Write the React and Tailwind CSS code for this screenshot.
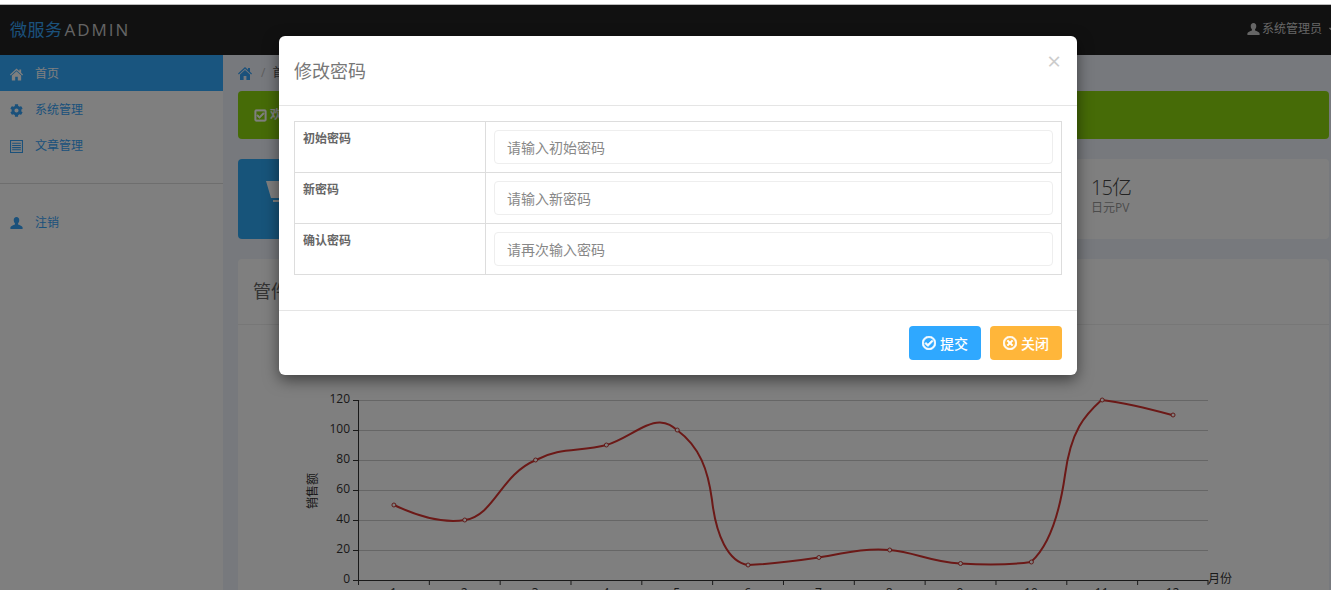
import React from "react";
import { FaCog, FaRegCheckSquare, FaRegCheckCircle, FaRegTimesCircle, FaCaretDown } from "react-icons/fa";

const cjk = { fontFamily: '"Open Sans", "Noto Sans CJK SC", sans-serif' };

const HomeIcon = ({ className }) => (
  <svg viewBox="0 0 14 13" fill="currentColor" className={className}>
    <path d="M7 0 L10 2.8 V1 H12 V4.7 L14 6.6 L13.2 7.5 L7 1.8 L0.8 7.5 L0 6.6 Z" />
    <path d="M7 3 L12 7.6 V13 H8.4 V9 H5.6 V13 H2 V7.6 Z" />
  </svg>
);

const UserIcon = ({ className }) => (
  <svg viewBox="0 0 14 13" fill="currentColor" className={className}>
    <path d="M7 0 C9 0 10 1.4 10 3.4 C10 5 9.4 6 8.7 6.8 V8 C10.6 8.8 13.4 9.6 13.6 11 V13 H0.4 V11 C0.6 9.6 3.4 8.8 5.3 8 V6.8 C4.6 6 4 5 4 3.4 C4 1.4 5 0 7 0 Z" />
  </svg>
);

const ListIcon = ({ className }) => (
  <svg viewBox="0 0 12 12" fill="currentColor" className={className}>
    <path fillRule="evenodd" d="M0 0 H12 V12 H0 Z M1 1 V11 H11 V1 Z" />
    <path d="M2 2.5 H10 V3.5 H2 Z M2 4.5 H10 V5.5 H2 Z M2 6.5 H10 V7.5 H2 Z M2 8.5 H10 V9.5 H2 Z" />
  </svg>
);

const CartIcon = ({ className }) => (
  <svg viewBox="0 0 44 28" fill="currentColor" className={className}>
    <path d="M0 1 H30 L34 0 H42 V3 H36 L32 18 H5 Z" />
    <path d="M7 20 H31 V22 H20 V26 H14 V22 H7 Z" />
  </svg>
);

const navItems = [
  { label: "首页", icon: HomeIcon, active: true },
  { label: "系统管理", icon: FaCog },
  { label: "文章管理", icon: ListIcon },
];

const stats = [
  { value: "2.5亿", label: "日元收入" },
  { value: "5千万", label: "日元成本" },
  { value: "120亿", label: "日元总额" },
  { value: "15亿", label: "日元PV" },
];

const rows = [
  { label: "初始密码", placeholder: "请输入初始密码" },
  { label: "新密码", placeholder: "请输入新密码" },
  { label: "确认密码", placeholder: "请再次输入密码" },
];

const values = [50, 40, 80, 90, 100, 10, 15, 20, 11, 12, 120, 110];
const axisLeft = 120;
const step = 70.83;
const yOf = (v) => 246 - v * 1.5;

// 销售额 chart, coordinates are relative to the svg box
const SalesChart = () => (
  <svg width="1000" height="270" viewBox="0 0 1000 270" className="block">
    {[20, 40, 60, 80, 100, 120].map((v) => (
      <line key={v} x1={axisLeft} x2={axisLeft + 850} y1={yOf(v) + 0.5} y2={yOf(v) + 0.5} stroke="#ccc" />
    ))}
    <line x1={axisLeft + 0.5} x2={axisLeft + 0.5} y1={yOf(120)} y2={yOf(0)} stroke="#333" />
    <line x1={axisLeft} x2={axisLeft + 850} y1={yOf(0) + 0.5} y2={yOf(0) + 0.5} stroke="#333" />
    {[0, 20, 40, 60, 80, 100, 120].map((v) => (
      <g key={v}>
        <line x1={axisLeft - 5} x2={axisLeft} y1={yOf(v) + 0.5} y2={yOf(v) + 0.5} stroke="#333" />
        <text x={axisLeft - 8} y={yOf(v) + 3} textAnchor="end" fontSize="12" fill="#333" style={cjk}>
          {v}
        </text>
      </g>
    ))}
    {values.map((_, i) => (
      <line
        key={i}
        x1={axisLeft + step * i + 0.5}
        x2={axisLeft + step * i + 0.5}
        y1={yOf(0)}
        y2={yOf(0) + 5}
        stroke="#333"
      />
    ))}
    <line x1={axisLeft + 850} x2={axisLeft + 850} y1={yOf(0)} y2={yOf(0) + 5} stroke="#333" />
    {values.map((_, i) => (
      <text
        key={i}
        x={axisLeft + step * (i + 0.5)}
        y={yOf(0) + 17}
        textAnchor="middle"
        fontSize="12"
        fill="#333"
        style={cjk}
      >
        {i + 1}
      </text>
    ))}
    <text x={axisLeft + 850} y={yOf(0) + 3} fontSize="12" fill="#333" style={cjk}>
      月份
    </text>
    <text
      transform={`translate(${axisLeft - 41} 157) rotate(-90)`}
      textAnchor="middle"
      fontSize="12"
      fill="#333"
      style={cjk}
    >
      销售额
    </text>
    <path
      transform="translate(-238 -334)"
      d="M394 505 C415 515 440 524 465 520 C495 515 500 475 536 460 C560 447 580 452 606.5 445 C625 440 645 422 660 422.5 C668 423 672 426 677 430 C700 447 708 470 712 500 C716 535 728 562 748 565 C770 564 795 561 819 557.5 C845 553 865 548 889.5 550 C915 552 930 562 960 563.5 C985 565 1010 565 1031 562 C1050 545 1060 510 1065 475 C1071 430 1085 415 1101.5 400 C1125 403 1150 409 1172 415"
      fill="none"
      stroke="#d8332f"
      strokeWidth="2"
    />
    {values.map((v, i) => (
      <circle
        key={i}
        cx={axisLeft + step * (i + 0.5) + 0.5}
        cy={yOf(v)}
        r="2"
        fill="#fff"
        stroke="#c23531"
      />
    ))}
  </svg>
);

const PasswordModal = () => (
  <div
    className="absolute left-[279px] top-[31px] w-[798px] rounded-md bg-white shadow-[0_5px_15px_rgba(0,0,0,0.5)]"
    style={cjk}
  >
    <div className="relative h-[70px] border-b border-[#e5e5e5] pl-[15px] pt-[20px]">
      <h4 className="text-[18px] leading-[30px] text-[#777]">修改密码</h4>
      <span className="absolute right-[16px] top-[10px] text-[24px] leading-[30px] text-[#ccc]">×</span>
    </div>
    <div className="px-[15px] pt-[15px] pb-[35px]">
      <table className="w-full border-collapse">
        <tbody>
          {rows.map((row) => (
            <tr key={row.label} className="h-[51px]">
              <th className="w-[191px] border border-[#ddd] px-[8px] pt-[8px] align-top text-left text-[12px] font-bold leading-[18px] text-[#666]">
                {row.label}
              </th>
              <td className="border border-[#ddd] p-[8px] align-top">
                <input
                  placeholder={row.placeholder}
                  className="block h-[34px] w-full rounded border border-[#eee] px-[12px] text-[14px] placeholder:text-[#888]"
                  style={cjk}
                />
              </td>
            </tr>
          ))}
        </tbody>
      </table>
    </div>
    <div className="flex justify-end gap-[9px] border-t border-[#e5e5e5] px-[15px] py-[15px]">
      <button className="flex h-[34px] w-[72px] items-center justify-center gap-[4px] rounded bg-[#2fa8ff] text-[14px] font-medium text-white">
        <FaRegCheckCircle className="text-[14px] stroke-[30px]" />
        提交
      </button>
      <button className="flex h-[34px] w-[72px] items-center justify-center gap-[4px] rounded bg-[#ffb63a] text-[14px] font-medium text-white">
        <FaRegTimesCircle className="text-[14px] stroke-[30px]" />
        关闭
      </button>
    </div>
  </div>
);

const App = () => {
  return (
    <div className="h-[590px] overflow-hidden bg-white" style={cjk}>
      <div className="h-[5px] border-b border-[#bbb] bg-white"></div>
      <div className="relative h-[585px] overflow-hidden">
        <header className="flex h-[50px] items-center justify-between bg-[#222] pl-[10px]">
          <div className="flex items-center text-[17px] tracking-[0.5px]">
            <span className="text-[#36a3f7]">微服务</span>
            <span className="ml-[2px] tracking-[2px] text-[#c8c8c8]">ADMIN</span>
          </div>
          <div className="flex w-[84px] shrink-0 items-center gap-[2px] pb-[3px] text-[12px] text-[#ccc]">
            <UserIcon className="h-[12px] w-[13px] shrink-0" />
            <span className="mr-[3px] whitespace-nowrap">系统管理员</span>
            <FaCaretDown className="shrink-0 text-[10px]" />
          </div>
        </header>
        <div className="flex h-[535px]">
          <aside className="w-[223px] shrink-0 bg-white text-[12px]">
            <ul>
              {navItems.map((item) => (
                <li
                  key={item.label}
                  className={`flex h-[36px] items-center gap-[12px] pl-[10px] pt-[2px] ${
                    item.active ? "bg-[#33aaff] text-white" : "text-[#36a3f7]"
                  }`}
                >
                  <item.icon className="h-[13px] w-[13px] shrink-0" />
                  {item.label}
                </li>
              ))}
            </ul>
            <div className="mt-[20px] border-t border-[#ddd] pt-[21px]">
              <div className="flex h-[36px] items-center gap-[12px] pl-[10px] text-[#36a3f7]">
                <UserIcon className="h-[12px] w-[13px] shrink-0" />
                注销
              </div>
            </div>
          </aside>
          <main className="min-w-0 flex-1 bg-[#eef2fa] pl-[15px] pr-[2px]">
            <div className="flex h-[36px] items-center text-[12px]">
              <HomeIcon className="h-[13px] w-[14px] text-[#36a3f7]" />
              <span className="ml-[9px] text-[#bbb]">/</span>
              <span className="ml-[7px] text-[#555]">首页</span>
            </div>
            <div className="flex h-[48px] items-center gap-[3px] rounded bg-[#8cd60f] pl-[16px] text-[12px] font-bold text-white">
              <FaRegCheckSquare className="text-[13px] stroke-[30px]" />
              欢迎使用微服务管理系统
            </div>
            <div className="mt-[20px] flex h-[80px] rounded bg-white">
              <div className="flex w-[100px] shrink-0 items-center justify-center rounded bg-[#2fa8f5] text-white">
                <CartIcon className="h-[28px] w-[44px] -translate-y-[5px]" />
              </div>
              <div className="flex pl-[1px] pt-[16px]">
                {stats.map((s) => (
                  <div key={s.label} className="w-[250.7px] text-[#444]">
                    <div className="text-[20px] font-light leading-[26px] tracking-[-1px]">{s.value}</div>
                    <div className="text-[12px] leading-[14px] text-[#999]">{s.label}</div>
                  </div>
                ))}
              </div>
            </div>
            <section className="mt-[20px] rounded-t bg-white">
              <div className="flex h-[66px] items-center border-b border-[#eee] pl-[15px] text-[18px] text-[#666]">
                管件销售统计
              </div>
              <div className="pt-[9px]">
                <SalesChart />
              </div>
            </section>
          </main>
        </div>
        <div className="absolute inset-0 bg-black/50"></div>
        <PasswordModal />
      </div>
    </div>
  );
};

export default App;
